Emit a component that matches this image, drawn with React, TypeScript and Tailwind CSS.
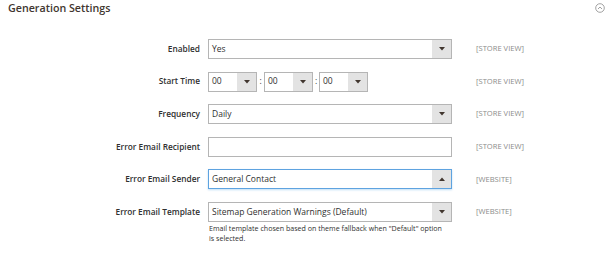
const font = { fontFamily: '"Open Sans", "Noto Sans", sans-serif' }

function Arrow({ up = false }: { up?: boolean }) {
  return (
    <svg width="6" height="4" viewBox="0 0 6 4" className="block">
      {up ? <path d="M0 4 L3 0.5 L6 4 Z" fill="#41362f" /> : <path d="M0 0 L3 3.5 L6 0 Z" fill="#41362f" />}
    </svg>
  )
}

function Select({
  value,
  width = 'w-[244px]',
  focused = false,
  button = true,
}: {
  value: string
  width?: string
  focused?: boolean
  button?: boolean
}) {
  return (
    <div
      className={`${width} h-[20px] flex bg-white border ${
        focused ? 'border-[#5ea3e0] shadow-[0_1px_2px_rgba(0,123,219,0.25)]' : 'border-[#b5b5b5]'
      }`}
    >
      <div className="flex-1 flex items-center pl-[3px] text-[8.5px] text-[#303030] truncate">{value}</div>
      {button && (
        <div className="w-[19px] h-full bg-[#e3e3e3] flex items-center justify-center">
          <Arrow up={focused} />
        </div>
      )}
    </div>
  )
}

function Row({
  label,
  scope,
  children,
}: {
  label: string
  scope: string
  children: React.ReactNode
}) {
  return (
    <div className="flex items-start">
      <div className="w-[200px] h-[20px] flex items-center justify-end text-[8.3px] font-semibold text-[#303030]">
        {label}
      </div>
      <div className="ml-[8px] w-[244px]">{children}</div>
      <div className="ml-[24px] h-[20px] flex items-center text-[7.6px] text-[#8c8c8c]">{scope}</div>
    </div>
  )
}

export default function App() {
  return (
    <div className="w-[615px] h-[257px] bg-white relative overflow-hidden" style={font}>
      <div className="flex items-center justify-between pl-[8px] pr-[10px] pt-[2px] h-[14px]">
        <h2 className="text-[10.7px] font-semibold text-[#41362f] leading-none">Generation Settings</h2>
        <svg width="10" height="10" viewBox="0 0 10 10">
          <circle cx="5" cy="5" r="4.3" fill="none" stroke="#8a8a8a" strokeWidth="0.8" />
          <path d="M3 6 L5 4 L7 6" fill="none" stroke="#8a8a8a" strokeWidth="0.8" />
        </svg>
      </div>

      <div className="mt-[25px] flex flex-col gap-[12.6px]">
        <Row label="Enabled" scope="[STORE VIEW]">
          <Select value="Yes" />
        </Row>
        <Row label="Start Time" scope="[STORE VIEW]">
          <div className="flex items-center">
            <Select value="00" width="w-[49px]" />
            <span className="w-[7px] text-center text-[8.5px] text-[#303030]">:</span>
            <Select value="00" width="w-[49px]" />
            <span className="w-[6px] text-center text-[8.5px] text-[#303030]">:</span>
            <Select value="00" width="w-[49px]" />
          </div>
        </Row>
        <Row label="Frequency" scope="[STORE VIEW]">
          <Select value="Daily" />
        </Row>
        <Row label="Error Email Recipient" scope="[STORE VIEW]">
          <Select value="" button={false} />
        </Row>
        <Row label="Error Email Sender" scope="[WEBSITE]">
          <Select value="General Contact" focused />
        </Row>
        <Row label="Error Email Template" scope="[WEBSITE]">
          <Select value="Sitemap Generation Warnings (Default)" />
          <p className="mt-[1px] pl-[1px] pr-[4px] text-[7.1px] leading-[10px] text-[#303030]">
            Email template chosen based on theme fallback when "Default" option is selected.
          </p>
        </Row>
      </div>
    </div>
  )
}
